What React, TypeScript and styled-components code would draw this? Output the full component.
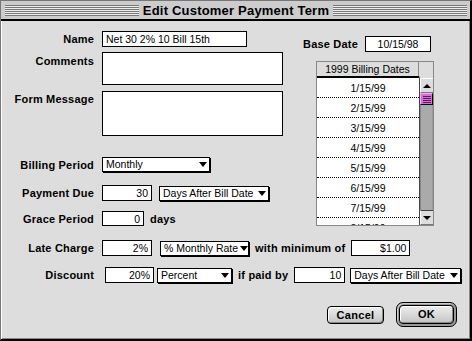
import { FC } from "react";
import styled, { createGlobalStyle } from "styled-components";

const GlobalStyle = createGlobalStyle`
  html, body {
    margin: 0;
    padding: 0;
    background: #dddddd;
  }
  body {
    font-family: "Liberation Sans", Arial, sans-serif;
    color: #000;
  }
`;

const Window = styled.div`
  width: 472px;
  height: 341px;
  box-sizing: border-box;
  background: #dddddd;
  border: 1px solid #777;
  border-right: 2px solid #000;
  border-bottom: 2px solid #000;
  box-shadow: inset 1px 1px 0 #fff, inset -1px -1px 0 #888;
  display: flex;
  flex-direction: column;
`;

const TitleBar = styled.div`
  height: 20px;
  flex-shrink: 0;
  box-sizing: border-box;
  background: #cccccc;
  border-bottom: 2px solid #000;
  padding: 0 3px 0 4px;
  display: flex;
  align-items: center;
  gap: 4px;
`;

const Stripes = styled.div`
  flex: 1;
  height: 11px;
  background: repeating-linear-gradient(
    to bottom,
    #777 0 1px,
    #eeeeee 1px 2px
  );
`;

const Title = styled.div`
  font-weight: bold;
  font-size: 13px;
  letter-spacing: 0.2px;
  line-height: 17px;
`;

const Body = styled.div`
  flex: 1;
  padding: 10px 0 0 8px;
  display: flex;
  flex-direction: column;
`;

const Top = styled.div`
  display: flex;
`;

const LeftCol = styled.div`
  width: 294px;
  display: flex;
  flex-direction: column;
`;

const RightCol = styled.div`
  display: flex;
  flex-direction: column;
`;

const Row = styled.div<{ $top?: number; $start?: boolean }>`
  display: flex;
  align-items: ${(p) => (p.$start ? "flex-start" : "center")};
  margin-top: ${(p) => p.$top ?? 0}px;
  white-space: nowrap;
`;

const Label = styled.div<{ $pad?: number }>`
  width: 85px;
  margin-right: 8px;
  flex-shrink: 0;
  text-align: right;
  font-weight: bold;
  font-size: 11px;
  letter-spacing: 0.2px;
  padding-top: ${(p) => p.$pad ?? 0}px;
`;

const Word = styled.span<{ $gap?: number }>`
  flex-shrink: 0;
  white-space: nowrap;
  font-weight: bold;
  font-size: 11px;
  letter-spacing: 0.2px;
  margin: 0 ${(p) => p.$gap ?? 6}px;
`;

const Field = styled.div<{
  $w: number;
  $h?: number;
  $ml?: number;
  $align?: "left" | "right" | "center";
}>`
  width: ${(p) => p.$w}px;
  height: ${(p) => p.$h ?? 16}px;
  margin-left: ${(p) => p.$ml ?? 0}px;
  box-sizing: border-box;
  background: #fff;
  border: 1px solid #000;
  padding: 0 3px;
  font-size: 10.5px;
  line-height: 14px;
  text-align: ${(p) => p.$align ?? "left"};
  white-space: nowrap;
  overflow: hidden;
  flex-shrink: 0;
`;

const Popup = styled.div<{ $w: number; $ml?: number }>`
  width: ${(p) => p.$w}px;
  height: 15px;
  margin-left: ${(p) => p.$ml ?? 0}px;
  box-sizing: border-box;
  background: #fff;
  border: 1px solid #000;
  box-shadow: 1px 1px 0 #000;
  padding: 0 2px 0 3px;
  display: flex;
  align-items: center;
  justify-content: space-between;
  font-size: 10.5px;
  line-height: 13px;
  white-space: nowrap;
  flex-shrink: 0;
`;

const Arrow = styled.span`
  width: 0;
  height: 0;
  margin-left: 2px;
  flex-shrink: 0;
  border-left: 4px solid transparent;
  border-right: 4px solid transparent;
  border-top: 5px solid #000;
`;

const List = styled.div`
  width: 118px;
  height: 165px;
  box-sizing: border-box;
  margin: 9px 0 0 13px;
  border: 1px solid #888;
  display: grid;
  grid-template-columns: 1fr 14px;
  grid-template-rows: 14px 1fr;
  background: #fff;
`;

const ListHead = styled.div`
  background: #dddddd;
  font-size: 10.5px;
  line-height: 14px;
  text-align: center;
  border-right: 1px solid #888;
`;

const HeadCorner = styled.div`
  background: #dddddd;
`;

const ListRows = styled.div`
  border-top: 2px solid #000;
  overflow: hidden;
`;

const ListRow = styled.div`
  height: 20px;
  box-sizing: border-box;
  border-bottom: 1px dotted #000;
  text-align: center;
  font-size: 10.5px;
  line-height: 20px;
`;

const Scroll = styled.div`
  display: flex;
  flex-direction: column;
  background: #aaaaaa;
  border-left: 1px solid #444;
  border-top: 2px solid #dddddd;
`;

const ScrollArrow = styled.div<{ $down?: boolean }>`
  height: 15px;
  box-sizing: border-box;
  background: #dddddd;
  border-top: 1px solid #fff;
  border-left: 1px solid #fff;
  border-bottom: 1px solid #777;
  display: flex;
  align-items: center;
  justify-content: center;
  ${(p) => (p.$down ? "border-top-color: #444;" : "")}

  &::after {
    content: "";
    width: 0;
    height: 0;
    border-left: 4px solid transparent;
    border-right: 4px solid transparent;
    ${(p) =>
      p.$down ? "border-top: 4px solid #000;" : "border-bottom: 4px solid #000;"}
  }
`;

const Thumb = styled.div`
  height: 12px;
  box-sizing: border-box;
  background: #d070d8;
  border: 1px solid #000;
  border-left-color: #f0b0f0;
  border-top-color: #f0b0f0;
  display: flex;
  align-items: center;
  justify-content: center;

  &::after {
    content: "";
    width: 8px;
    height: 7px;
    background: repeating-linear-gradient(
      to bottom,
      #601860 0 1px,
      transparent 1px 2px
    );
  }
`;

const Track = styled.div`
  flex: 1;
  background: #aaaaaa;
  box-shadow: inset 1px 0 0 #888, inset -1px 0 0 #999;
`;

const Buttons = styled.div`
  display: flex;
  justify-content: flex-end;
  align-items: center;
  gap: 12px;
  margin: 19px 13px 0 0;
`;

const Button = styled.div<{ $w: number; $h?: number }>`
  width: ${(p) => p.$w}px;
  height: ${(p) => p.$h ?? 18}px;
  box-sizing: border-box;
  border: 1px solid #000;
  border-radius: 4px;
  background: linear-gradient(#eeeeee, #c4c4c4);
  box-shadow: inset 1px 1px 0 #fff, inset -1px -1px 0 #888;
  font-weight: bold;
  font-size: 11px;
  letter-spacing: 0.3px;
  line-height: ${(p) => (p.$h ?? 18) - 2}px;
  text-align: center;
`;

const DefaultRing = styled.div`
  box-sizing: border-box;
  border: 1px solid #000;
  border-radius: 7px;
  padding: 2px;
  background: #999;
  box-shadow: inset 1px 1px 0 #ccc;
`;

const dates = [
  "1/15/99",
  "2/15/99",
  "3/15/99",
  "4/15/99",
  "5/15/99",
  "6/15/99",
  "7/15/99",
  "8/15/99",
];

const App: FC = () => {
  return (
    <>
      <GlobalStyle />
      <Window>
        <TitleBar>
          <Stripes />
          <Title>Edit Customer Payment Term</Title>
          <Stripes />
        </TitleBar>
        <Body>
          <Top>
            <LeftCol>
              <Row>
                <Label>Name</Label>
                <Field $w={145}>Net 30 2% 10 Bill 15th</Field>
              </Row>
              <Row $top={5} $start>
                <Label $pad={3}>Comments</Label>
                <Field $w={181} $h={33} />
              </Row>
              <Row $top={6} $start>
                <Label $pad={2}>Form Message</Label>
                <Field $w={181} $h={45} />
              </Row>
              <Row $top={21}>
                <Label>Billing Period</Label>
                <Popup $w={108}>
                  Monthly
                  <Arrow />
                </Popup>
              </Row>
              <Row $top={13}>
                <Label>Payment Due</Label>
                <Field $w={50} $align="right">
                  30
                </Field>
                <Popup $w={110} $ml={7}>
                  Days After Bill Date
                  <Arrow />
                </Popup>
              </Row>
              <Row $top={10}>
                <Label>Grace Period</Label>
                <Field $w={42} $h={15} $align="right">
                  0
                </Field>
                <Word $gap={6}>days</Word>
              </Row>
            </LeftCol>
            <RightCol>
              <Row $top={5}>
                <Word $gap={0}>Base Date</Word>
                <Field $w={66} $ml={7} $align="center">
                  10/15/98
                </Field>
              </Row>
              <List>
                <ListHead>1999 Billing Dates</ListHead>
                <HeadCorner />
                <ListRows>
                  {dates.map((d) => (
                    <ListRow key={d}>{d}</ListRow>
                  ))}
                </ListRows>
                <Scroll>
                  <ScrollArrow />
                  <Thumb />
                  <Track />
                  <ScrollArrow $down />
                </Scroll>
              </List>
            </RightCol>
          </Top>
          <Row $top={14}>
            <Label>Late Charge</Label>
            <Field $w={50} $align="right">
              2%
            </Field>
            <Popup $w={89} $ml={8}>
              % Monthly Rate
              <Arrow />
            </Popup>
            <Word $gap={6}>with minimum of</Word>
            <Field $w={59} $align="right">
              $1.00
            </Field>
          </Row>
          <Row $top={11}>
            <Label>Discount</Label>
            <Field $w={49} $ml={3} $align="right">
              20%
            </Field>
            <Popup $w={75} $ml={3}>
              Percent
              <Arrow />
            </Popup>
            <Word $gap={6}>if paid by</Word>
            <Field $w={51} $align="right">
              10
            </Field>
            <Popup $w={111} $ml={5}>
              Days After Bill Date
              <Arrow />
            </Popup>
          </Row>
          <Buttons>
            <Button $w={57}>Cancel</Button>
            <DefaultRing>
              <Button $w={55} $h={19}>
                OK
              </Button>
            </DefaultRing>
          </Buttons>
        </Body>
      </Window>
    </>
  );
};

export default App;
